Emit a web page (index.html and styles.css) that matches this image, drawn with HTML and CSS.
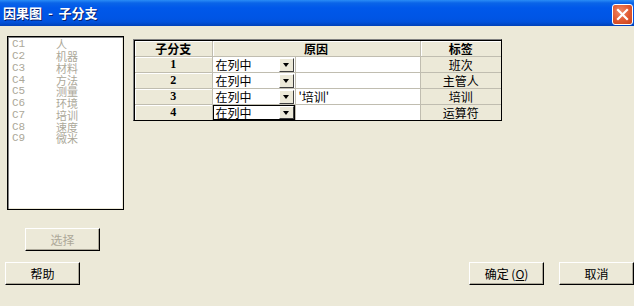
FILE: index.html
```html
<!DOCTYPE html>
<html lang="zh">
<head>
  <meta charset="UTF-8">
  <title>因果图 - 子分支</title>
  <link rel="stylesheet" href="styles.css">
</head>
<body>
  <div class="titlebar">
    <span class="title">因果图  -  子分支</span>
    <span class="close-btn">
      <svg width="13" height="13" viewBox="0 0 13 13"><path d="M2 2 L11 11 M11 2 L2 11" stroke="#fff" stroke-width="2.2" stroke-linecap="square"/></svg>
    </span>
  </div>

  <div class="content">
    <div class="left-col">
      <div class="listbox">
        <div class="item"><span class="code">C1</span><span class="name">人</span></div>
        <div class="item"><span class="code">C2</span><span class="name">机器</span></div>
        <div class="item"><span class="code">C3</span><span class="name">材料</span></div>
        <div class="item"><span class="code">C4</span><span class="name">方法</span></div>
        <div class="item"><span class="code">C5</span><span class="name">测量</span></div>
        <div class="item"><span class="code">C6</span><span class="name">环境</span></div>
        <div class="item"><span class="code">C7</span><span class="name">培训</span></div>
        <div class="item"><span class="code">C8</span><span class="name">速度</span></div>
        <div class="item"><span class="code">C9</span><span class="name">微米</span></div>
      </div>
      <button class="btn btn-select" disabled>选择</button>
    </div>

    <div class="grid-frame">
      <table class="grid">
        <colgroup>
          <col class="c-branch">
          <col class="c-combo">
          <col class="c-reason">
          <col class="c-label">
        </colgroup>
        <tr class="head">
          <th>子分支</th>
          <th colspan="2">原因</th>
          <th>标签</th>
        </tr>
        <tr>
          <td class="num">1</td>
          <td class="combo-cell"><div class="combo"><span>在列中</span><span class="drop"></span></div></td>
          <td class="reason"></td>
          <td class="label">班次</td>
        </tr>
        <tr>
          <td class="num">2</td>
          <td class="combo-cell"><div class="combo"><span>在列中</span><span class="drop"></span></div></td>
          <td class="reason"></td>
          <td class="label">主管人</td>
        </tr>
        <tr>
          <td class="num">3</td>
          <td class="combo-cell"><div class="combo"><span>在列中</span><span class="drop"></span></div></td>
          <td class="reason">'培训'</td>
          <td class="label">培训</td>
        </tr>
        <tr>
          <td class="num">4</td>
          <td class="combo-cell"><div class="combo focused"><span>在列中</span><span class="drop"></span></div></td>
          <td class="reason"></td>
          <td class="label">运算符</td>
        </tr>
      </table>
    </div>
  </div>

  <div class="footer">
    <button class="btn">帮助</button>
    <div class="footer-right">
      <button class="btn">确定 (<u>O</u>)</button>
      <button class="btn">取消</button>
    </div>
  </div>
</body>
</html>
```

FILE: styles.css
```css
body {
  margin: 0;
  padding: 0;
  width: 634px;
  height: 306px;
  overflow: hidden;
  background: #ece9d8;
  font-family: "Noto Sans CJK SC", sans-serif;
  font-size: 12px;
  color: #000;
}

.titlebar {
  height: 26px;
  display: flex;
  align-items: center;
  justify-content: space-between;
  padding: 0 1px 0 3px;
  background: linear-gradient(#2a8cf6 0, #0a64e8 3px, #0058ea 8px, #0055e5 18px, #0152dc 22px, #0041b8 26px);
}

.title {
  white-space: pre;
  color: #fff;
  font-weight: bold;
  font-size: 13px;
  line-height: 16px;
  text-shadow: 1px 1px 0 #0a1e6a;
}

.close-btn {
  width: 19px;
  height: 19px;
  margin-top: 2px;
  border: 1px solid #fff;
  border-radius: 3px;
  background: radial-gradient(circle at 40% 35%, #ef8a6a 0, #e0582f 55%, #c7401c 100%);
  display: flex;
  align-items: center;
  justify-content: center;
}

.content {
  display: flex;
  gap: 9px;
  padding: 10px 0 0 7px;
  height: 231px;
  box-sizing: border-box;
}

.left-col {
  display: flex;
  flex-direction: column;
}

.listbox {
  width: 117px;
  height: 174px;
  box-sizing: border-box;
  background: #fff;
  border: 1px solid #000;
  box-shadow: inset 1px 1px 0 #808080, inset -1px -1px 0 #ece9d8;
  padding: 2px 0 0 4px;
}

.item {
  display: flex;
  align-items: center;
  height: 11.75px;
  overflow: visible;
  color: #aca899;
}

.code {
  width: 44px;
  font-family: "Liberation Mono", monospace;
  font-size: 11px;
  line-height: 11px;
}

.name {
  font-size: 11px;
  line-height: 11px;
}

.btn {
  width: 75px;
  height: 23px;
  padding: 0;
  background: #ece9d8;
  border: 1px solid;
  border-color: #fff #000 #000 #fff;
  box-shadow: inset -1px -1px 0 #aca899;
  font-family: "Noto Sans CJK SC", sans-serif;
  font-size: 12px;
  color: #000;
}

.btn-select {
  margin: 18px 0 0 18px;
  color: #aca899;
}

.grid-frame {
  align-self: flex-start;
  margin-top: 3px;
  border: 1px solid;
  border-color: #808080 #000 #000 #808080;
  box-shadow: inset 1px 1px 0 #000;
  padding: 1px 0 0 1px;
}

.grid {
  border-collapse: collapse;
  table-layout: fixed;
  width: 366px;
}

.c-branch { width: 77px; }
.c-combo { width: 83px; }
.c-reason { width: 125px; }
.c-label { width: 81px; }

.grid th,
.grid td {
  padding: 0;
  height: 15px;
  line-height: 15px;
  border: 1px solid #c0bdb0;
  overflow: hidden;
  white-space: nowrap;
  font-size: 12px;
}

.grid tr:first-child th { border-top: none; }
.grid th:first-child,
.grid td:first-child { border-left: none; }
.grid th:last-child,
.grid td:last-child { border-right: none; }
.grid tr:last-child td { border-bottom: none; }

.grid th {
  background: #ece9d8;
  box-shadow: inset 1px 1px 0 #fff;
  font-weight: bold;
}

.num {
  background: #ece9d8;
  box-shadow: inset 1px 1px 0 #fff;
  text-align: center;
  font-family: "Liberation Serif", serif;
  font-weight: bold;
}

.combo-cell {
  background: #fff;
}

.combo {
  display: flex;
  align-items: center;
  justify-content: space-between;
  height: 15px;
  box-sizing: border-box;
  padding: 0 1px 0 3px;
  line-height: 12px;
}

.combo.focused {
  border: 1px solid #000;
  padding: 0 0 0 2px;
}

.drop {
  width: 15px;
  height: 14px;
  box-sizing: border-box;
  background: #ece9d8;
  border: 1px solid;
  border-color: #fff #404040 #404040 #fff;
  position: relative;
}

.focused .drop {
  height: 13px;
}

.drop::after {
  content: "";
  position: absolute;
  left: 3px;
  top: 4px;
  border-left: 3.5px solid transparent;
  border-right: 3.5px solid transparent;
  border-top: 4px solid #000;
}

.reason {
  background: #fff;
  padding-left: 3px !important;
}

.label {
  background: #ece9d8;
  text-align: center;
}

.footer {
  display: flex;
  justify-content: space-between;
  padding: 5px 0 0 5px;
}

.footer-right {
  display: flex;
  gap: 15px;
}
```
